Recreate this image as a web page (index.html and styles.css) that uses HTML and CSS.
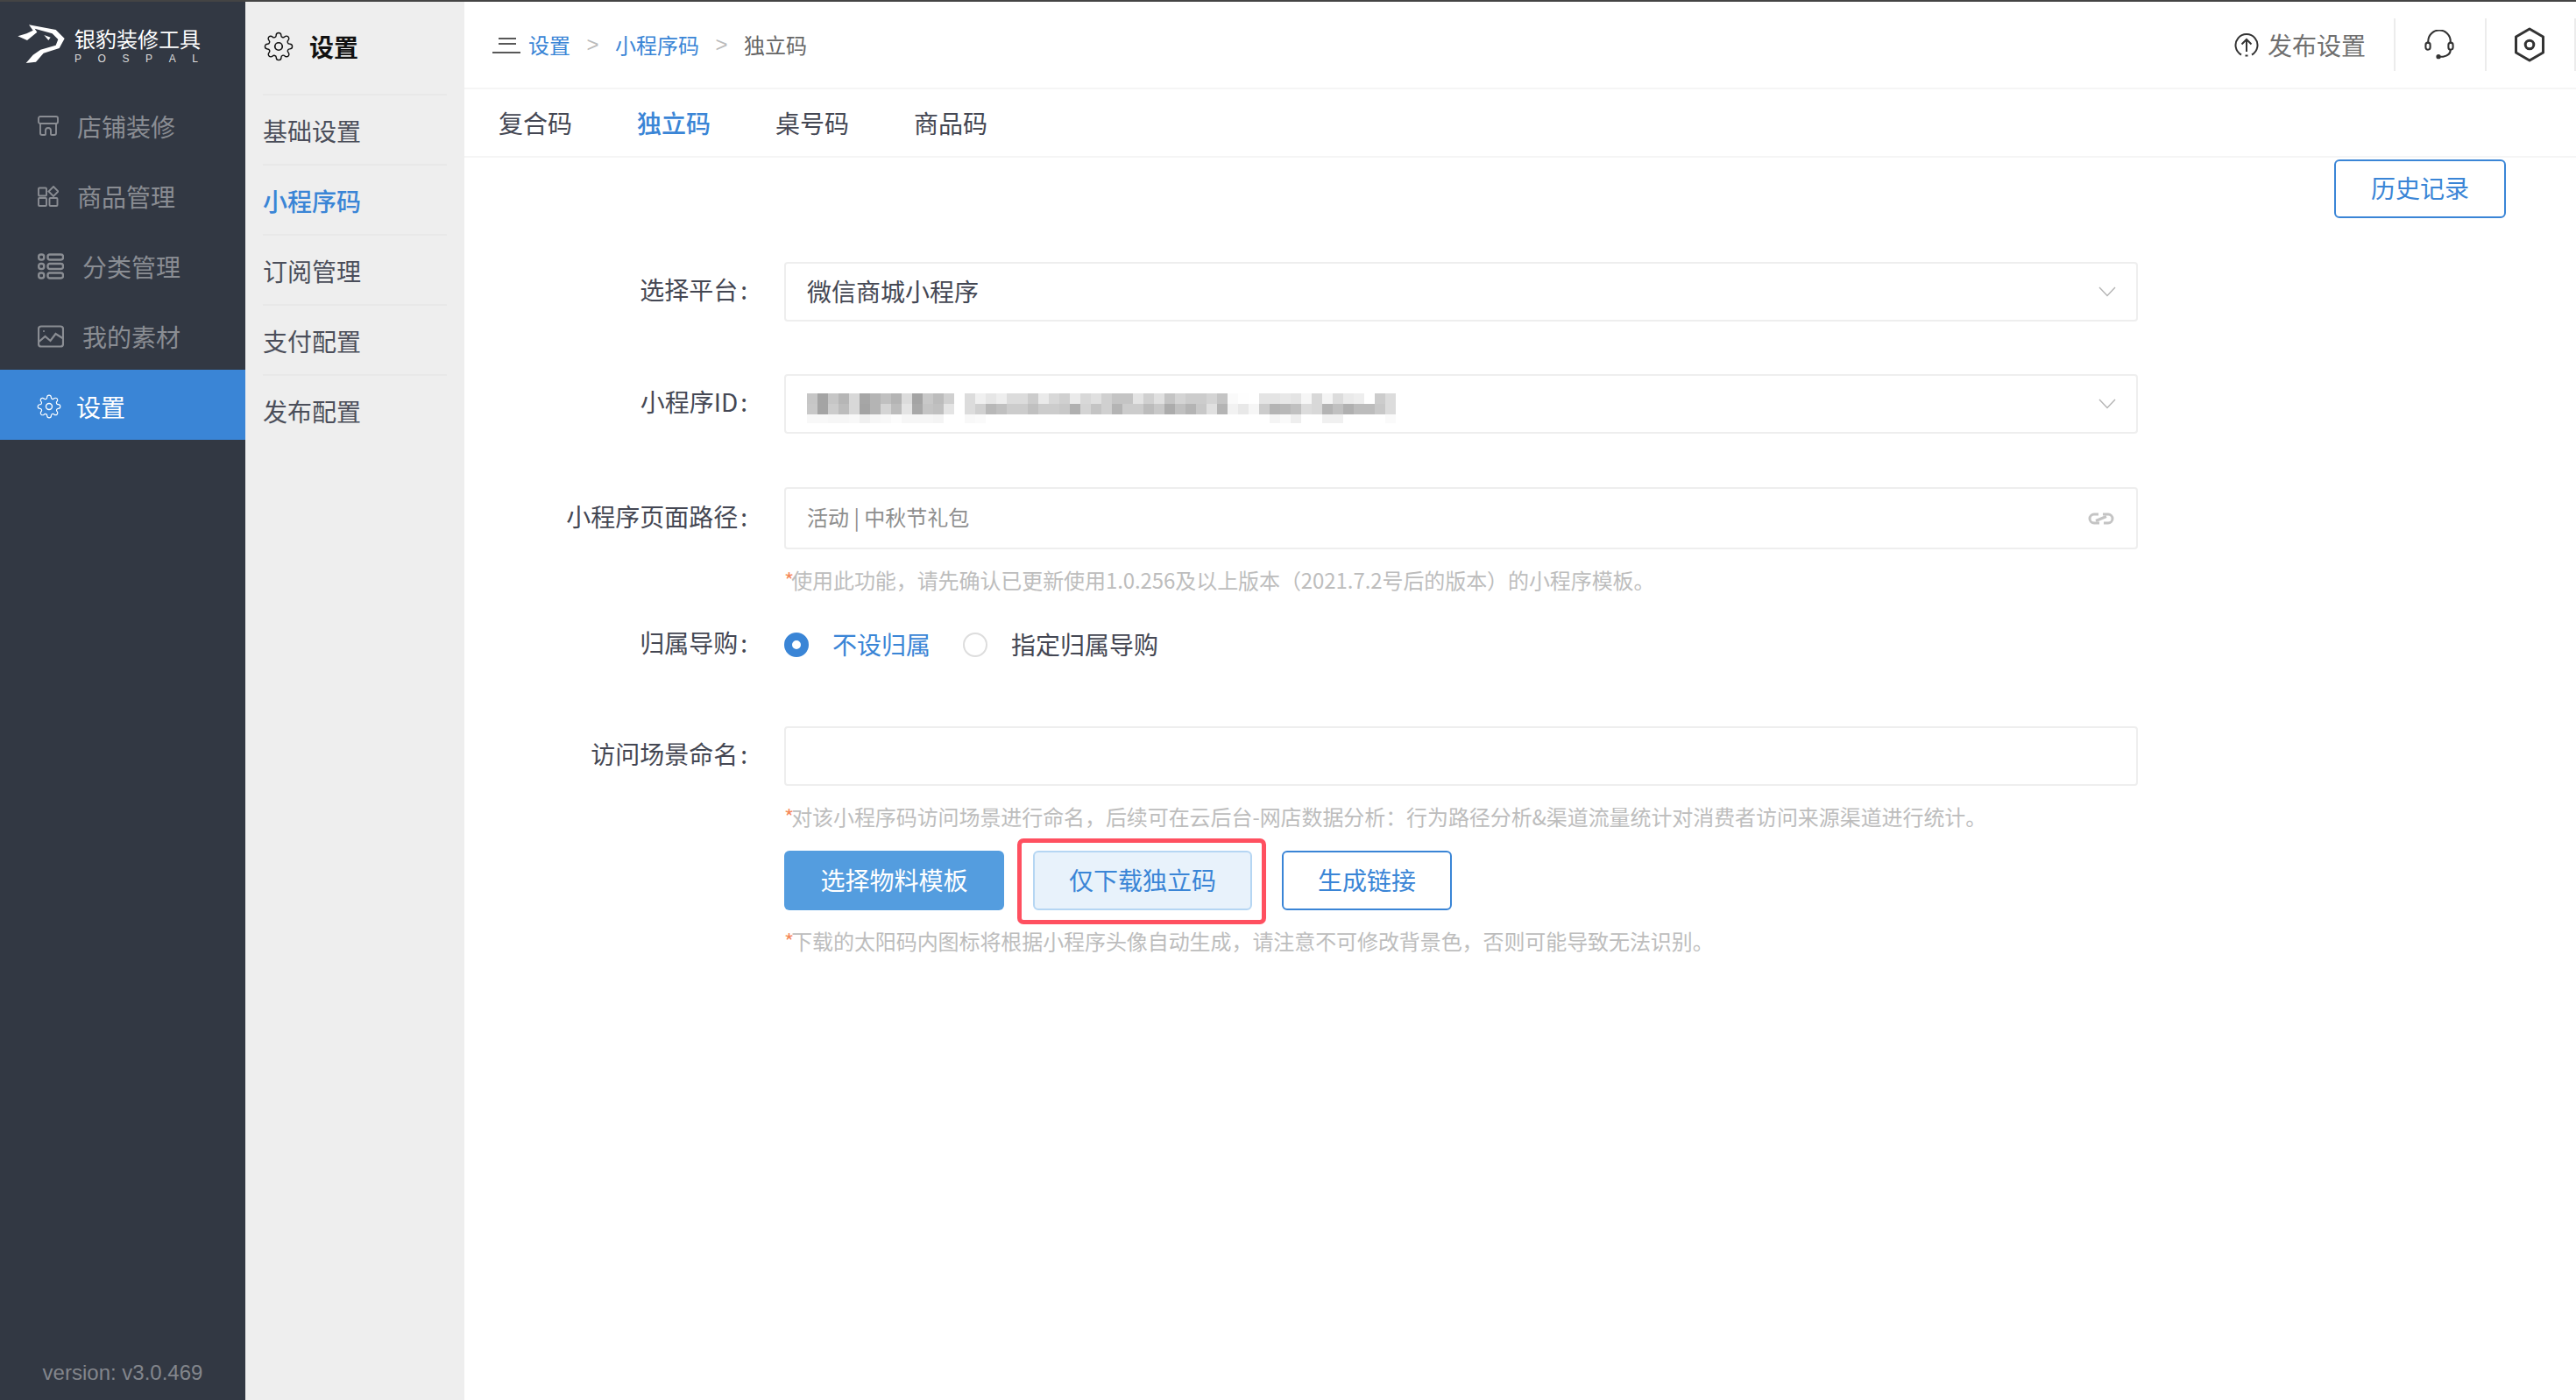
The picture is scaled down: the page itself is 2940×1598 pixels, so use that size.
FILE: index.html
```html
<!DOCTYPE html>
<html lang="zh-CN">
<head>
  <title>银豹装修工具</title>
  <meta charset="UTF-8">
  <link rel="stylesheet" href="styles.css">
</head>
<body>
  <svg class="sprite" aria-hidden="true">
    <symbol id="gear" viewBox="0 0 24 24">
      <path fill="none" stroke="currentColor" stroke-width="1" d="M19.4 15a1.65 1.65 0 0 0 .33 1.82l.06.06a2 2 0 0 1 0 2.83 2 2 0 0 1-2.83 0l-.06-.06a1.65 1.65 0 0 0-1.82-.33 1.65 1.65 0 0 0-1 1.51V21a2 2 0 0 1-2 2 2 2 0 0 1-2-2v-.09A1.65 1.65 0 0 0 9 19.4a1.65 1.65 0 0 0-1.82.33l-.06.06a2 2 0 0 1-2.83 0 2 2 0 0 1 0-2.83l.06-.06a1.65 1.65 0 0 0 .33-1.82 1.65 1.65 0 0 0-1.51-1H3a2 2 0 0 1-2-2 2 2 0 0 1 2-2h.09A1.65 1.65 0 0 0 4.6 9a1.65 1.65 0 0 0-.33-1.82l-.06-.06a2 2 0 0 1 0-2.83 2 2 0 0 1 2.83 0l.06.06a1.65 1.65 0 0 0 1.82.33H9a1.65 1.65 0 0 0 1-1.51V3a2 2 0 0 1 2-2 2 2 0 0 1 2 2v.09a1.65 1.65 0 0 0 1 1.51 1.65 1.65 0 0 0 1.82-.33l.06-.06a2 2 0 0 1 2.83 0 2 2 0 0 1 0 2.83l-.06.06a1.65 1.65 0 0 0-.33 1.82V9a1.65 1.65 0 0 0 1.51 1H21a2 2 0 0 1 2 2 2 2 0 0 1-2 2h-.09a1.65 1.65 0 0 0-1.51 1z"/>
      <circle cx="12" cy="12" r="3" fill="none" stroke="currentColor" stroke-width="1.2"/>
    </symbol>
    <symbol id="chevron" viewBox="0 0 20 12">
      <path d="M1 1l9 9.5L19 1" fill="none" stroke="#b4b4b4" stroke-width="1.4"/>
    </symbol>
  </svg>

  <div class="top-strip"></div>
  <div class="app">
    <aside class="sidebar">
      <div class="logo">
        <svg class="logo-mark" viewBox="20 15 180 150">
          <path fill="#fff" d="M68 25L160 42L190 72L172 105L118 122L92 152L58 156L82 128L108 110L160 95L168 75L148 55L88 38L96 50L62 78L30 64L60 55L82 44Z"/>
          <path fill="#fff" d="M120 60L142 68L135 78Z"/>
        </svg>
        <div class="logo-text">
          <div class="logo-name">银豹装修工具</div>
          <div class="logo-sub"><span>P</span><span>O</span><span>S</span><span>P</span><span>A</span><span>L</span></div>
        </div>
      </div>
      <nav class="menu">
        <a class="menu-item">
          <svg class="icon-24" viewBox="0 0 24 24" fill="none" stroke="currentColor" stroke-width="1.9">
            <path d="M3 1h18a2 2 0 0 1 2 2v4a2 2 0 0 1-2 2H3a2 2 0 0 1-2-2V3a2 2 0 0 1 2-2z"/>
            <path d="M3 9v11a2 2 0 0 0 2 2h3a1 1 0 0 0 1-1v-4a3 3 0 0 1 6 0v4a1 1 0 0 0 1 1h3a2 2 0 0 0 2-2V9"/>
          </svg>
          店铺装修
        </a>
        <a class="menu-item">
          <svg class="icon-24" viewBox="0 0 24 24" fill="none" stroke="currentColor" stroke-width="1.9">
            <rect x="1" y="2.5" width="9" height="9" rx="1"/>
            <rect x="1" y="14" width="9" height="9" rx="1"/>
            <rect x="13.5" y="14" width="9" height="9" rx="1"/>
            <path d="M18 1l5.500 5.500L18 12l-5.500-5.500z"/>
          </svg>
          商品管理
        </a>
        <a class="menu-item">
          <svg class="icon-30" viewBox="0 0 30 30" fill="none" stroke="currentColor" stroke-width="2.4">
            <rect x="1.2" y="1.5" width="6" height="6" rx="2.4"/>
            <rect x="1.2" y="12" width="6" height="6" rx="2.4"/>
            <rect x="1.2" y="22.5" width="6" height="6" rx="2.4"/>
            <rect x="11.5" y="1.5" width="17.5" height="6" rx="2.4"/>
            <rect x="11.5" y="12" width="17.5" height="6" rx="2.4"/>
            <rect x="11.5" y="22.5" width="17.5" height="6" rx="2.4"/>
          </svg>
          分类管理
        </a>
        <a class="menu-item">
          <svg class="icon-30" viewBox="0 0 30 26" fill="none" stroke="currentColor" stroke-width="2.2">
            <rect x="1" y="1.5" width="28" height="23" rx="3"/>
            <path d="M1.500 19l7-6 6 5 6-8 8 5"/>
            <circle cx="7" cy="7" r="1" fill="currentColor" stroke="none"/>
          </svg>
          我的素材
        </a>
        <a class="menu-item active">
          <svg class="icon-gear"><use href="#gear"/></svg>
          设置
        </a>
      </nav>
      <div class="version">version: v3.0.469</div>
    </aside>

    <aside class="subnav">
      <div class="subnav-title">
        <svg class="subnav-gear"><use href="#gear"/></svg>
        设置
      </div>
      <a class="subnav-item">基础设置</a>
      <a class="subnav-item active">小程序码</a>
      <a class="subnav-item">订阅管理</a>
      <a class="subnav-item">支付配置</a>
      <a class="subnav-item">发布配置</a>
    </aside>

    <main class="main">
      <header class="topbar">
        <div class="crumbs">
          <svg class="crumb-icon" viewBox="0 0 32 22" stroke="#222" stroke-width="1.6">
            <path d="M7 4h20M7 10h20M0 20h32"/>
          </svg>
          <a class="crumb-link">设置</a>
          <span class="crumb-sep">&gt;</span>
          <a class="crumb-link">小程序码</a>
          <span class="crumb-sep">&gt;</span>
          <span class="crumb-now">独立码</span>
        </div>
        <div class="top-actions">
          <div class="publish">
            <svg class="publish-icon" viewBox="0 0 28 28" fill="none" stroke="#333" stroke-width="2">
              <path d="M8 25.500A12.500 12.500 0 1 1 20 25.500"/>
              <path d="M14 22V8M8.500 13.500L14 8l5.500 5.500"/>
              <path d="M12.500 26.500h3"/>
            </svg>
            发布设置
          </div>
          <div class="top-cell">
            <svg class="headset" viewBox="0 0 36 36" fill="none" stroke="#333" stroke-width="2.2">
              <path d="M4.500 17V14a13.500 13.500 0 0 1 27 0v3"/>
              <rect x="1.5" y="15.5" width="5.5" height="8.5" rx="2.7"/>
              <rect x="29" y="15.5" width="5.5" height="8.5" rx="2.7"/>
              <path d="M31.500 24c0 4-3 7.500-9 8.500h-5"/>
              <circle cx="17" cy="32.500" r="2.800" fill="#333" stroke="none"/>
            </svg>
          </div>
          <div class="top-cell">
            <svg class="hex" viewBox="0 0 36 40" fill="none" stroke="#333" stroke-width="3">
              <path d="M18 2l15.500 9v18L18 38 2.500 29V11z" stroke-linejoin="round"/>
              <circle cx="18" cy="20" r="4.800"/>
            </svg>
          </div>
        </div>
      </header>

      <div class="tabs">
        <a class="tab">复合码</a>
        <a class="tab active">独立码</a>
        <a class="tab">桌号码</a>
        <a class="tab">商品码</a>
      </div>

      <div class="content">
        <div class="history-row">
          <button class="btn btn-outline btn-history">历史记录</button>
        </div>

        <form class="form">
          <label class="form-label">选择平台</label>
          <div class="field">
            <span class="field-value">微信商城小程序</span>
            <svg class="chevron"><use href="#chevron"/></svg>
          </div>

          <label class="form-label row-id">小程序ID</label>
          <div class="field row-id">
            <div class="mosaic" id="mosaic"></div>
            <svg class="chevron"><use href="#chevron"/></svg>
          </div>

          <label class="form-label row-path">小程序页面路径</label>
          <div class="field field-tall row-path">
            <span class="field-placeholder">活动 | 中秋节礼包</span>
            <svg class="link-icon" viewBox="0 0 32 16" fill="none" stroke="#c4c4c4" stroke-width="3">
              <path d="M13 3H8a5 5 0 0 0 0 10h6"/>
              <path d="M18 3h6a5 5 0 0 1 0 10h-5"/>
              <path d="M10 10.500L22 5.500"/>
            </svg>
          </div>
          <p class="hint">使用此功能，请先确认已更新使用1.0.256及以上版本（2021.7.2号后的版本）的小程序模板。</p>

          <label class="form-label row-radio">归属导购</label>
          <div class="radios row-radio">
            <span class="radio-dot checked"></span>
            <span class="radio-text checked">不设归属</span>
            <span class="radio-dot"></span>
            <span class="radio-text">指定归属导购</span>
          </div>

          <label class="form-label row-scene">访问场景命名</label>
          <div class="field row-scene"></div>
          <p class="hint">对该小程序码访问场景进行命名，后续可在云后台-网店数据分析：行为路径分析&amp;渠道流量统计对消费者访问来源渠道进行统计。</p>

          <div class="actions">
            <button type="button" class="btn btn-solid">选择物料模板</button>
            <button type="button" class="btn btn-soft btn-marked">仅下载独立码</button>
            <button type="button" class="btn btn-outline btn-link">生成链接</button>
          </div>
          <p class="hint">下载的太阳码内图标将根据小程序头像自动生成，请注意不可修改背景色，否则可能导致无法识别。</p>
        </form>
      </div>
    </main>
  </div>

  <script>
    // blurred app id, one hex grey per cell, 56 cells per row
    const mosaicRows = [
      'c6a4c6b6d8a6b4c0b4dca4c8bcd0ffdcf0e6eedcdcccead8d0ead8e0' + 'd0c4c4e4d0e0c4d4ccccd4c4fafeffe4e4e8e4f6d8f4dceaeeffccdc',
      'c8a4ccbcd8a4b4d4bce4a8c4c0e4ffdcd0b8c0ccccc0ccccc8b0d4c4' + 'd0b4ccccbcc8acc0b4c8e0b4f2e8f6ccb4b8c0dcd8b4c0b0bcbcc8dc',
      'f8f8f6f6f8f0f6f8fcf6f6f6f4fffff8faffffffffffffffffffffff' + 'fffffffffffffffffffffffffffffffff4faeefffff0f0fffffffffa'
    ];
    const mosaic = document.getElementById('mosaic');
    mosaicRows.forEach(function (row) {
      row.match(/.{2}/g).slice(0, 56).forEach(function (grey) {
        const cell = document.createElement('span');
        cell.style.backgroundColor = '#' + grey + grey + grey;
        mosaic.appendChild(cell);
      });
    });
  </script>
</body>
</html>
```

FILE: styles.css
```css
* {
  box-sizing: border-box;
}
html, body {
  margin: 0;
  height: 100%;
}
body {
  display: flex;
  flex-direction: column;
  height: 1598px;
  overflow: hidden;
  background-color: #fff;
  font-family: "Noto Sans CJK SC", "Liberation Sans", sans-serif;
  font-size: 28px;
  color: #444753;
}
.sprite {
  display: none;
}
.top-strip {
  height: 2px;
  background-color: #444;
  flex: none;
}
.app {
  display: flex;
  flex: 1;
  min-height: 0;
}

/* dark sidebar */
.sidebar {
  width: 280px;
  flex: none;
  display: flex;
  flex-direction: column;
  background-color: #323843;
}
.logo {
  height: 100px;
  display: flex;
  align-items: flex-start;
  padding: 23px 0 0 17px;
  gap: 8px;
  color: #fff;
}
.logo-mark {
  width: 60px;
  height: 50px;
  flex: none;
}
.logo-text {
  padding-top: 4px;
}
.logo-name {
  font-size: 24px;
  line-height: 30px;
  white-space: nowrap;
}
.logo-sub {
  display: flex;
  justify-content: space-between;
  font-family: "Liberation Sans", sans-serif;
  font-size: 12px;
  line-height: 14px;
  margin-top: 1px;
  color: #dcdcdc;
  padding-right: 3px;
}
.menu {
  display: flex;
  flex-direction: column;
}
.menu-item {
  height: 80px;
  display: flex;
  align-items: center;
  gap: 21px;
  padding: 3px 0 0 43px;
  color: #8a8d93;
  line-height: 40px;
}
.menu-item.active {
  background-color: #3a85d6;
  color: #fff;
}
.icon-24 {
  width: 24px;
  height: 24px;
  flex: none;
}
.icon-30 {
  width: 30px;
  height: 30px;
  flex: none;
}
.icon-gear {
  width: 28px;
  height: 28px;
  flex: none;
  margin: 0 -4px 0 -1px;
}
.version {
  margin-top: auto;
  padding-bottom: 17px;
  text-align: center;
  font-family: "Liberation Sans", sans-serif;
  font-size: 24px;
  line-height: 28px;
  color: #83868c;
}

/* light second column */
.subnav {
  width: 250px;
  flex: none;
  padding: 0 20px;
  background-color: #eee;
}
.subnav-title {
  height: 105px;
  display: flex;
  align-items: center;
  gap: 18px;
  font-weight: 700;
  color: #111;
  padding-bottom: 3px;
}
.subnav-gear {
  width: 34px;
  height: 34px;
  flex: none;
  margin-left: 1px;
}
.subnav-item {
  display: block;
  height: 80px;
  line-height: 81px;
  border-top: 2px solid #e8e8e8;
  color: #4b4e5a;
}
.subnav-item.active {
  color: #3a85d6;
  font-weight: 500;
}

/* main column */
.main {
  flex: 1;
  min-width: 0;
  display: flex;
  flex-direction: column;
}
.topbar {
  height: 100px;
  flex: none;
  display: flex;
  justify-content: space-between;
  align-items: center;
  border-bottom: 2px solid #f5f5f5;
  padding-left: 32px;
}
.crumbs {
  display: flex;
  align-items: center;
  font-size: 24px;
  line-height: 34px;
}
.crumb-icon {
  width: 32px;
  height: 22px;
  margin-right: 9px;
}
.crumb-link {
  color: #3a85d6;
}
.crumb-now {
  color: #666;
}
.crumb-sep {
  font-family: "Liberation Sans", sans-serif;
  color: #bbb;
  width: 51px;
  text-align: center;
}
.top-actions {
  display: flex;
  align-items: center;
}
.publish {
  display: flex;
  align-items: center;
  gap: 10px;
  color: #707070;
  padding-right: 32px;
  line-height: 60px;
}
.publish-icon {
  width: 28px;
  height: 28px;
}
.top-cell {
  width: 104px;
  height: 60px;
  display: flex;
  align-items: center;
  justify-content: center;
  padding-right: 3px;
  border-left: 2px solid #ececec;
}
.top-cell:last-child {
  border-right: 2px solid #ececec;
}
.headset {
  width: 34px;
  height: 34px;
}
.hex {
  width: 36px;
  height: 40px;
}
.tabs {
  height: 78px;
  flex: none;
  display: flex;
  gap: 74px;
  padding-left: 39px;
  border-bottom: 2px solid #f5f5f5;
  line-height: 76px;
}
.tab.active {
  color: #3a85d6;
  font-weight: 500;
}
.content {
  flex: 1;
}
.history-row {
  display: flex;
  justify-content: flex-end;
  padding: 2px 80px 0 0;
}

/* buttons */
.btn {
  height: 68px;
  border-radius: 6px;
  font: inherit;
  line-height: 1;
  padding: 0 0 3px;
}
.btn-outline {
  background-color: #fff;
  border: 2px solid #3a85d6;
  color: #3a85d6;
}
.btn-history {
  width: 196px;
  height: 67px;
}
.btn-solid {
  width: 251px;
  background-color: #549ddf;
  border: none;
  color: #fff;
}
.btn-soft {
  width: 250px;
  background-color: #e8f2fb;
  border: 2px solid #b5d6f3;
  color: #3a85d6;
}
.btn-link {
  width: 194px;
  margin-left: 1px;
}
.btn-marked {
  position: relative;
}
.btn-marked::after {
  content: "";
  position: absolute;
  top: -16px;
  right: -18px;
  bottom: -18px;
  left: -20px;
  border: 5px solid #ff5060;
  border-radius: 7px;
}

/* form */
.form {
  display: grid;
  grid-template-columns: 323px 1545px;
  column-gap: 42px;
  margin-top: 50px;
}
.form-label {
  align-self: center;
  text-align: right;
  line-height: 35px;
  white-space: nowrap;
  padding-bottom: 5px;
}
.form-label::after {
  content: ":";
  margin-left: 3px;
}
.field {
  grid-column: 2;
  height: 68px;
  display: flex;
  align-items: center;
  justify-content: space-between;
  padding: 0 23px 0 24px;
  border: 2px solid #eee;
  border-radius: 4px;
}
.field-tall {
  height: 71px;
  padding-right: 24px;
}
.row-id {
  margin-top: 60px;
}
.row-path {
  margin-top: 61px;
}
.row-radio {
  margin-top: 34px;
}
.row-scene {
  margin-top: 73px;
}
.field-value {
  margin-bottom: 3px;
  color: #444753;
}
.field-placeholder {
  margin-bottom: 5px;
  font-size: 24px;
  color: #8e8e8e;
}
.chevron {
  width: 20px;
  height: 12px;
  flex: none;
}
.link-icon {
  width: 32px;
  height: 16px;
  flex: none;
}
.mosaic {
  display: grid;
  grid-template-columns: repeat(56, 12px);
  grid-template-rows: 12px 12px 10px;
  margin-top: 10px;
  filter: blur(0.6px);
}
.hint {
  grid-column: 2;
  margin: 18px 0 3px;
  font-size: 24px;
  line-height: 34px;
  letter-spacing: -0.08px;
  color: #bdbdbd;
  white-space: nowrap;
}
.hint::before {
  content: "*";
  margin-right: -3px;
  color: #f58a5c;
}
.radios {
  grid-column: 2;
  display: flex;
  align-items: center;
  height: 40px;
}
.radio-dot {
  width: 28px;
  height: 28px;
  flex: none;
  border: 2px solid #ddd;
  border-radius: 50%;
  background-color: #fff;
}
.radio-dot.checked {
  border: 9px solid #3a85d6;
}
.radio-text {
  margin: 0 37px 3px 27px;
}
.radio-text.checked {
  color: #3a85d6;
}
.actions {
  grid-column: 2;
  display: flex;
  gap: 33px;
  margin-top: 19px;
}
```
